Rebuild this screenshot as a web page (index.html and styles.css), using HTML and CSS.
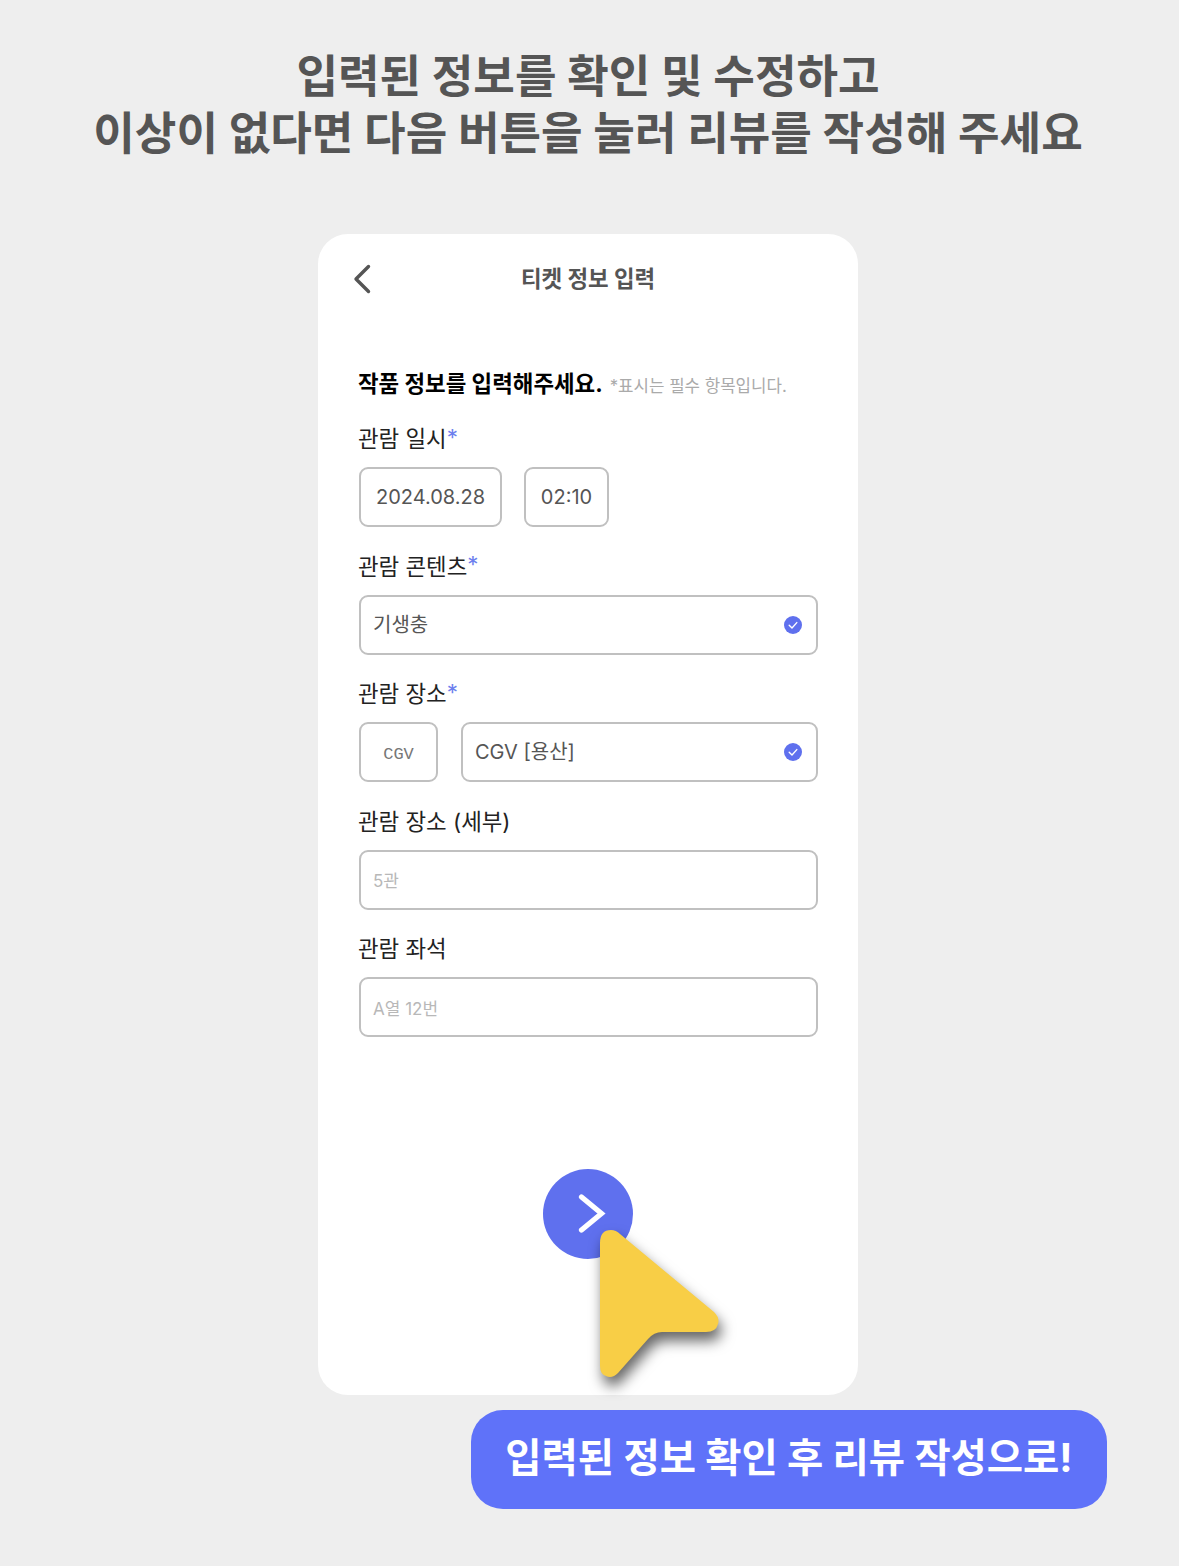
FILE: index.html
```html
<!DOCTYPE html>
<html lang="ko">
<head>
  <meta charset="UTF-8">
  <title>티켓 정보 입력</title>
  <link rel="stylesheet" href="styles.css">
</head>
<body>

<h1 class="headline">입력된 정보를 확인 및 수정하고<br>이상이 없다면 다음 버튼을 눌러 리뷰를 작성해 주세요</h1>

<div class="card">
  <div class="topbar">
    <svg class="back" width="18" height="30" viewBox="0 0 18 30"><path d="M15.5 2.5 L3 15 L15.5 27.5" fill="none" stroke="#555" stroke-width="3.4" stroke-linecap="round" stroke-linejoin="round"/></svg>
    <div class="topbar-title">티켓 정보 입력</div>
  </div>

  <div class="intro">
    <span class="intro-title">작품 정보를 입력해주세요.</span>
    <span class="intro-note">*표시는 필수 항목입니다.</span>
  </div>

  <div class="label first">관람 일시<span class="req">*</span></div>
  <div class="row">
    <div class="field date">2024.08.28</div>
    <div class="field time">02:10</div>
  </div>

  <div class="label">관람 콘텐츠<span class="req">*</span></div>
  <div class="row">
    <div class="field grow left">기생충
      <svg class="check" width="18" height="18" viewBox="0 0 18 18"><circle cx="9" cy="9" r="9" fill="#5f70ee"/><path d="M5.2 9.2 L8 12 L12.8 6.6" fill="none" stroke="#fff" stroke-width="1.4" stroke-linecap="round" stroke-linejoin="round"/></svg>
    </div>
  </div>

  <div class="label">관람 장소<span class="req">*</span></div>
  <div class="row">
    <div class="field brand">CGV</div>
    <div class="field grow left">CGV [용산]
      <svg class="check" width="18" height="18" viewBox="0 0 18 18"><circle cx="9" cy="9" r="9" fill="#5f70ee"/><path d="M5.2 9.2 L8 12 L12.8 6.6" fill="none" stroke="#fff" stroke-width="1.4" stroke-linecap="round" stroke-linejoin="round"/></svg>
    </div>
  </div>

  <div class="label">관람 장소 (세부)</div>
  <div class="row">
    <div class="field grow left hint">5관</div>
  </div>

  <div class="label">관람 좌석</div>
  <div class="row">
    <div class="field grow left hint">A열 12번</div>
  </div>

  <div class="next">
    <svg width="40" height="44" viewBox="0 0 40 44"><path d="M13.5 5 L33.5 21.5 L13.5 38" fill="none" stroke="#fff" stroke-width="5.2" stroke-linecap="round" stroke-linejoin="miter"/></svg>
  </div>

  <!-- cursor sits over the button -->
  <svg class="cursor" width="150" height="180" viewBox="0 0 150 180"><path d="M2 15 Q2 2 13 2 Q18 2 22 6 L116 84 Q122 90 120 96 Q118 104 108 104 L64 104 Q56 104 50 111 L20 145 Q14 151 8 148 Q2 146 2 138 Z" fill="#f8ce46"/></svg>
</div>

<div class="callout-wrap">
  <div class="callout">입력된 정보 확인 후 리뷰 작성으로!</div>
</div>

</body>
</html>
```

FILE: styles.css
```css
* {
  box-sizing: border-box;
}
body {
  margin: 0;
  height: 1566px;
  overflow: hidden;
  background: #eeeeee;
  font-family: Inter, "Noto Sans CJK KR", sans-serif;
}
.headline {
  margin: 0;
  padding: 48px 3px 0 0;
  height: 234px;
  text-align: center;
  font-size: 45.2px;
  line-height: 57px;
  font-weight: 700;
  color: #555555;
}
.card {
  position: relative;
  width: 540px;
  height: 1161px;
  margin-left: 318px;
  padding: 0 40px 0 41px;
  background: #ffffff;
  border-radius: 30px;
}
.topbar {
  position: relative;
  height: 86px;
  padding-right: 1px;
  display: flex;
  align-items: center;
  justify-content: center;
}
.back {
  position: absolute;
  left: -6px;
  top: 30px;
}
.topbar-title {
  font-size: 22.4px;
  font-weight: 700;
  color: #555555;
}
.intro {
  margin: 47px 0 0 -1px;
  height: 30px;
  display: flex;
  align-items: center;
  gap: 7px;
}
.intro-title {
  font-size: 22.4px;
  font-weight: 700;
  color: #000000;
}
.intro-note {
  font-size: 16.8px;
  color: #aaaaaa;
  padding-top: 5px;
}
.label {
  height: 40px;
  margin: 17.5px 0 0 -1px;
  display: flex;
  align-items: center;
  font-size: 22.4px;
  color: #222222;
}
.label.first {
  margin-top: 20px;
}
.req {
  color: #6d7fee;
}
.row {
  display: flex;
  gap: 23px;
  margin-top: 10px;
}
.field {
  position: relative;
  height: 60px;
  display: flex;
  align-items: center;
  justify-content: center;
  border: 2px solid #c0c0c0;
  border-radius: 9px;
  font-size: 20px;
  color: #555555;
}
.date {
  width: 143px;
}
.time {
  width: 85px;
  margin-left: -1px;
}
.brand {
  width: 79px;
  flex: none;
  padding-top: 5px;
  font-family: "Liberation Mono", monospace;
  font-size: 17px;
  color: #777777;
}
.grow {
  flex: 1;
}
.left {
  justify-content: flex-start;
  padding: 0 0 3px 12px;
}
.hint {
  font-size: 17px;
  color: #b8b8b8;
  padding: 0 0 0 12px;
}
.check {
  position: absolute;
  right: 14px;
  top: 19px;
}
.next {
  width: 90px;
  height: 90px;
  margin: 132px 0 0 184px;
  display: flex;
  align-items: center;
  justify-content: center;
  background: #5f70ee;
  border-radius: 50%;
}
.cursor {
  position: absolute;
  left: 280px;
  top: 994px;
  overflow: visible;
  filter: drop-shadow(3px 9px 7px rgba(0, 0, 0, 0.6));
}
.callout-wrap {
  display: flex;
  justify-content: flex-end;
  padding: 15px 72px 0 0;
}
.callout {
  width: 636px;
  height: 99px;
  display: flex;
  align-items: center;
  justify-content: center;
  padding-bottom: 10px;
  background: #5f72f9;
  border-radius: 32px;
  font-size: 39.4px;
  font-weight: 700;
  color: #ffffff;
}
```
